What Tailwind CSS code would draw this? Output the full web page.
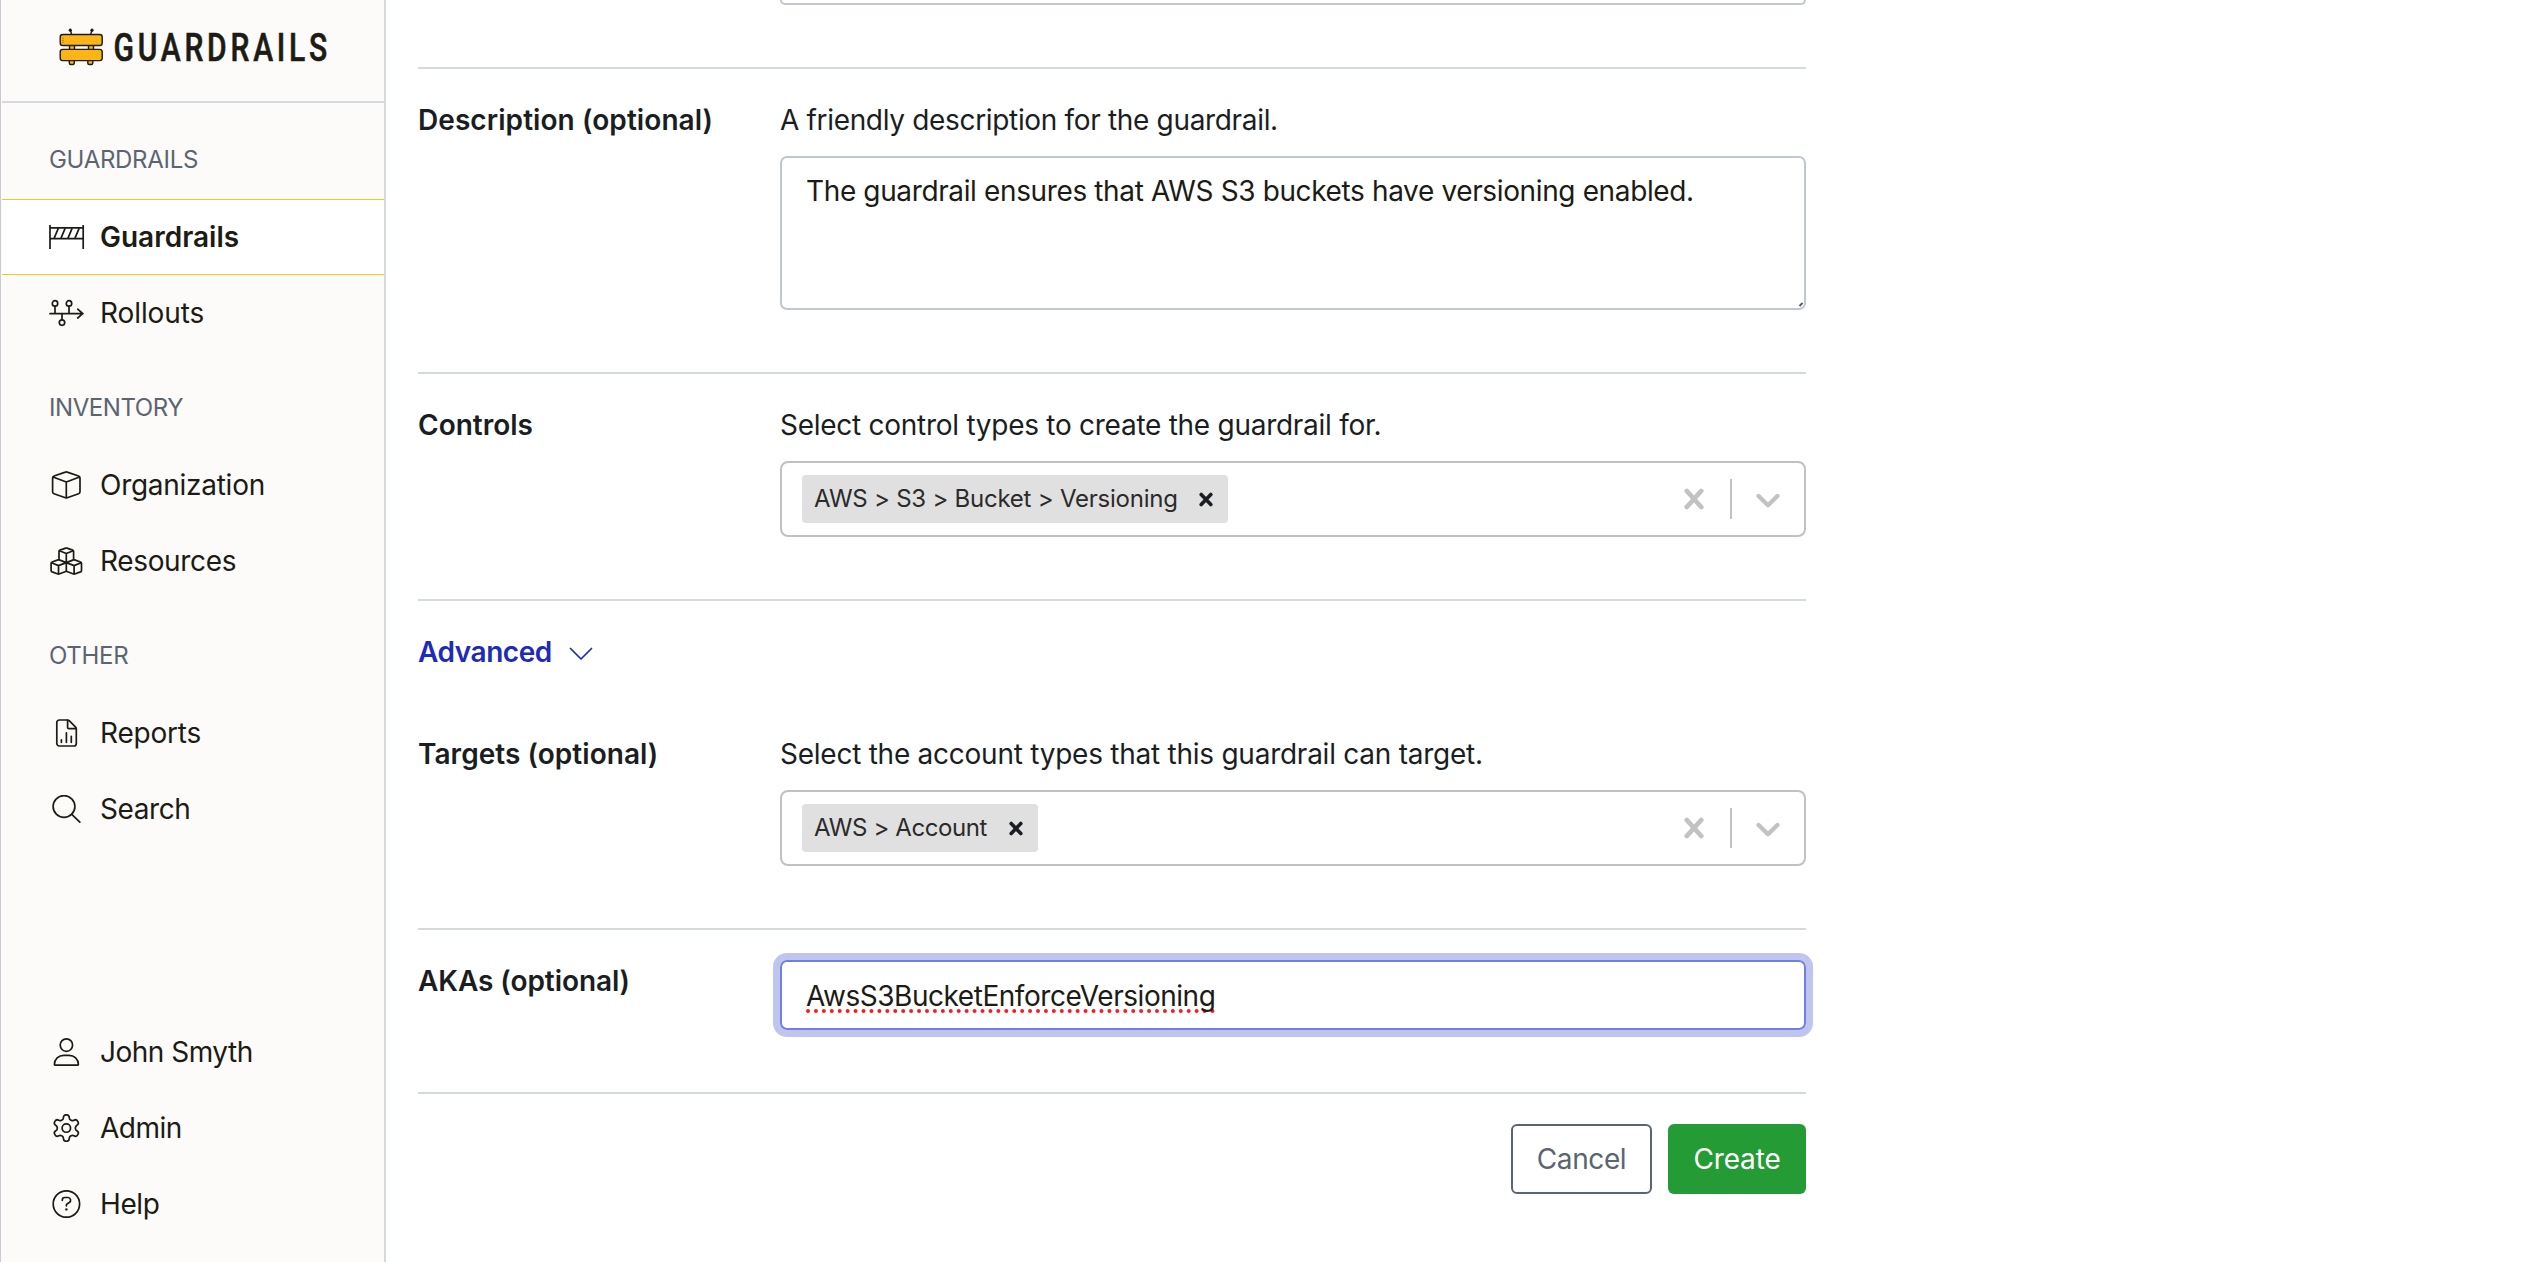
<!DOCTYPE html>
<html lang="en">
<head>
<meta charset="utf-8">
<title>Guardrails</title>
<script src="https://cdn.jsdelivr.net/npm/@tailwindcss/browser@4"></script>
</head>
<body class="flex h-[1262px] w-[2530px] overflow-hidden bg-white font-[Inter,sans-serif] text-[28px] leading-[42px] text-[#1a1e23]">

<aside class="flex w-[386px] shrink-0 flex-col border-l border-r-2 border-l-[#c9cbd1] border-r-[#d5dade] bg-[#fcfbf9] pl-px text-[#1c1b15]">
  <div class="h-[103px] shrink-0 border-b-2 border-[#d5dade]">
    <svg class="block" width="360" height="100" viewBox="2 0 360 100">
      <g stroke="#1c1b15" stroke-width="1.4">
        <path d="M70.3 30l1.5 5M92 30l-1.5 5" fill="none"/>
        <g fill="#fdb515">
          <path d="M69.5 45h5v5h-5zM88.5 45h5v5h-5z"/>
          <path d="M69.3 60h5v3a1.5 1.5 0 0 1-1.5 1.5h-2a1.5 1.5 0 0 1-1.500-1.500zM87.8 60h5v3a1.5 1.5 0 0 1-1.5 1.5h-2a1.5 1.5 0 0 1-1.500-1.500z"/>
          <rect x="60.2" y="34.5" width="42" height="11" rx="2.6"/>
          <rect x="60.2" y="49.4" width="42" height="11.2" rx="2.6"/>
        </g>
        <path d="M63 37.5v6" stroke="#a8730c" stroke-width="1.2" stroke-dasharray="1.2 1"/>
      </g>
      <circle cx="70.3" cy="30.2" r="1.6" fill="#1c1b15"/><circle cx="92" cy="30.2" r="1.6" fill="#1c1b15"/>
      <g transform="translate(113.500 61) scale(.78 1)"><text x="0" y="0" font-family="Roboto, sans-serif" font-size="38.500" font-weight="500" letter-spacing="3" textLength="277" lengthAdjust="spacing" fill="#1c1b15" stroke="#1c1b15" stroke-width=".6">GUARDRAILS</text></g>
    </svg>
  </div>

  <div class="flex h-24 shrink-0 items-center pt-[17px] pl-[47px] text-2xl tracking-[-0.3px] text-[#5b6571]">GUARDRAILS</div>
  <a class="flex h-[76px] shrink-0 items-center gap-[15px] border-t border-b border-[#fcc425] bg-white pl-[46px] font-semibold">
    <svg width="37" height="28" viewBox="0 0 37 28" fill="none" stroke="currentColor" stroke-width="1.7"><path d="M2 2v24M35.2 2v24M2 4.800h33M2 15.700h33M6.200 15.200l4-9.600M13 15.200l4-9.600M20 15.200l4-9.600M27 15.200l4-9.600"/></svg>Guardrails
  </a>
  <a class="flex h-[76px] shrink-0 items-center gap-[15px] pl-[46px] tracking-[-0.1px]">
    <svg width="37" height="28" viewBox="0 0 37 28" fill="none" stroke="currentColor" stroke-width="1.7" stroke-linecap="round"><path d="M2 14.600h33M29.700 10.200l5 4.400-5 4.400M7 7.300v7M21 7.300v7M14 14.600v6"/><circle cx="7" cy="4.400" r="2.700"/><circle cx="21" cy="4.400" r="2.700"/><circle cx="14" cy="23.600" r="2.700"/></svg>Rollouts
  </a>

  <div class="flex h-24 shrink-0 items-center pt-[17px] pl-[47px] text-2xl tracking-[-0.42px] text-[#5b6571]">INVENTORY</div>
  <a class="flex h-[76px] shrink-0 items-center gap-[15px] pl-[46px] tracking-[-0.27px]">
    <svg width="37" height="28" viewBox="0 0 37 28" fill="none" stroke="currentColor" stroke-width="1.7" stroke-linejoin="round"><path d="M17.400 1.100a2.500 2.500 0 0 1 1.800 0L30.600 5a2 2 0 0 1 1.400 1.900v13.900a2 2 0 0 1-1.400 1.900L19.200 26.800a2.500 2.500 0 0 1-1.800 0L6 22.700a2 2 0 0 1-1.400-1.900V6.900A2 2 0 0 1 6 5zM5 6l13.300 5L31.600 6M18.300 11v16"/></svg>Organization
  </a>
  <a class="flex h-[76px] shrink-0 items-center gap-[15px] pl-[46px] tracking-[-0.35px]">
    <svg width="37" height="28" viewBox="0 0 37 28" fill="none" stroke="currentColor" stroke-width="1.7" stroke-linejoin="round"><path d="M11 12.300V4.500a1.500 1.500 0 0 1 1-1.400l5.700-2a2 2 0 0 1 1.200 0l5.700 2a1.500 1.500 0 0 1 1 1.400v7.800M11.400 3.800l6.900 2.700 6.900-2.700M18.300 6.500v8.500M18.300 15.600v8.600l-7.200 2.800a2 2 0 0 1-1.200 0l-5.800-2.100a1.600 1.600 0 0 1-1-1.500v-6.900a1.600 1.600 0 0 1 1-1.500l6.500-2.400 7.700 3 7.700-3 6.500 2.400a1.600 1.600 0 0 1 1 1.500v6.900a1.600 1.600 0 0 1-1 1.500l-5.800 2.100a2 2 0 0 1-1.200 0l-7.200-2.800M3.500 15.800l7 2.800 7.800-3 7.800 3 7-2.800M10.500 18.600v8.500M26.100 18.600v8.500"/></svg>Resources
  </a>

  <div class="flex h-24 shrink-0 items-center pt-[17px] pl-[47px] text-2xl tracking-[-0.3px] text-[#5b6571]">OTHER</div>
  <a class="flex h-[76px] shrink-0 items-center gap-[15px] pl-[46px] tracking-[-0.2px]">
    <svg width="37" height="28" viewBox="0 0 37 28" fill="none" stroke="currentColor" stroke-width="1.7" stroke-linejoin="round" stroke-linecap="round"><path d="M11.300 1h8.200a2.500 2.500 0 0 1 1.700.7l6.400 6.400a2.500 2.500 0 0 1 .7 1.700v14.700a2.500 2.500 0 0 1-2.500 2.500H11.300a2.500 2.500 0 0 1-2.500-2.500V3.500a2.500 2.500 0 0 1 2.500-2.500zM19.600 1.200v7.200a1.300 1.300 0 0 0 1.300 1.300h7.200M13.400 20.800v2.500M18.400 13.800v9.500M23.300 17.300v6"/></svg>Reports
  </a>
  <a class="flex h-[76px] shrink-0 items-center gap-[15px] pl-[46px] tracking-[-0.4px]">
    <svg width="37" height="28" viewBox="0 0 37 28" fill="none" stroke="currentColor" stroke-width="1.7" stroke-linecap="round"><circle cx="16" cy="11.500" r="10.900"/><path d="M23.800 19.300l8 7.900"/></svg>Search
  </a>

  <div class="mt-[167px] flex h-[76px] shrink-0 items-center gap-[15px] pl-[46px] tracking-[-0.5px]">
    <svg width="37" height="28" viewBox="0 0 37 28" fill="none" stroke="currentColor" stroke-width="1.7" stroke-linejoin="round"><circle cx="18.400" cy="7.100" r="6.200"/><path d="M6.900 27.100c-.3 0-.5-.2-.5-.5 0-5.300 4.200-9.300 9.400-9.300h5.200c5.200 0 9.400 4 9.400 9.300 0 .3-.2.5-.5.5z"/></svg>John Smyth
  </div>
  <a class="flex h-[76px] shrink-0 items-center gap-[15px] pl-[46px] tracking-[-0.5px]">
    <svg width="37" height="28" viewBox="0 0 37 28" fill="none" stroke="currentColor" stroke-width="1.300"><g transform="translate(2.500 -1.800) scale(1.320)"><path d="M12.220 2h-.44a2 2 0 0 0-2 2v.18a2 2 0 0 1-1 1.730l-.43.25a2 2 0 0 1-2 0l-.15-.08a2 2 0 0 0-2.730.73l-.22.38a2 2 0 0 0 .73 2.730l.15.100a2 2 0 0 1 1 1.720v.51a2 2 0 0 1-1 1.740l-.15.090a2 2 0 0 0-.73 2.730l.22.38a2 2 0 0 0 2.730.73l.15-.08a2 2 0 0 1 2 0l.43.25a2 2 0 0 1 1 1.730V20a2 2 0 0 0 2 2h.44a2 2 0 0 0 2-2v-.18a2 2 0 0 1 1-1.730l.43-.25a2 2 0 0 1 2 0l.15.080a2 2 0 0 0 2.730-.73l.22-.39a2 2 0 0 0-.73-2.730l-.15-.080a2 2 0 0 1-1-1.740v-.5a2 2 0 0 1 1-1.740l.15-.090a2 2 0 0 0 .73-2.730l-.22-.38a2 2 0 0 0-2.730-.73l-.15.080a2 2 0 0 1-2 0l-.43-.25a2 2 0 0 1-1-1.730V4a2 2 0 0 0-2-2z"/><circle cx="12" cy="12" r="3.200"/></g></svg>Admin
  </a>
  <a class="flex h-[76px] shrink-0 items-center gap-[15px] pl-[46px] tracking-[-0.4px]">
    <svg width="37" height="28" viewBox="0 0 37 28" fill="none" stroke="currentColor" stroke-width="1.7" stroke-linecap="round"><circle cx="18.400" cy="14" r="13.200"/><path d="M14.300 10.300v-.4a2.400 2.400 0 0 1 2.400-2.400h3.200a2.700 2.700 0 0 1 1.400 5l-2.400 1.500a1 1 0 0 0-.5.900v.9"/><circle cx="18.400" cy="19.400" r="1.200" fill="currentColor" stroke="none"/></svg>Help
  </a>
</aside>

<main class="ml-8 w-[1388px] shrink-0">
  <section class="flex h-[69px] justify-end border-b-2 border-[#d5dade]">
    <div class="h-[5px] w-[1026px] rounded-b-[7px] border-2 border-t-0 border-[#c1c7d0]"></div>
  </section>

  <section class="flex h-[305px] border-b-2 border-[#d5dade] pt-[30px]">
    <div class="w-[362px] shrink-0 font-semibold tracking-[0.07px]">Description (optional)</div>
    <div class="w-[1026px] shrink-0">
      <div class="tracking-[-0.33px]">A friendly description for the guardrail.</div>
      <div class="relative mt-[15px] h-[154px] rounded-[7px] border-2 border-[#c1c7d0] pt-[12px] pl-[24px] tracking-[-0.37px] text-[#1c1b15]">The guardrail ensures that AWS S3 buckets have versioning enabled.
        <svg class="absolute right-0 bottom-0" width="8" height="8" viewBox="0 0 8 8"><path d="M3.500 6l3-3" stroke="#555" stroke-width="1.800"/></svg>
      </div>
    </div>
  </section>

  <section class="flex h-[227px] border-b-2 border-[#d5dade] pt-[30px]">
    <div class="w-[362px] shrink-0 font-semibold">Controls</div>
    <div class="w-[1026px] shrink-0">
      <div class="tracking-[-0.27px]">Select control types to create the guardrail for.</div>
      <div class="mt-[15px] flex h-[76px] items-center rounded-lg border-2 border-[#c1c1c1] pl-5">
        <div class="flex h-12 w-[426px] items-center justify-between rounded bg-[#e0e0e0] pr-[15px] pl-3 text-2xl tracking-[-0.24px] text-[#2b2b2b]">AWS &gt; S3 &gt; Bucket &gt; Versioning
          <svg width="14" height="15" viewBox="0 0 14 15" stroke="#1a1e23" stroke-width="3.600" stroke-linecap="round"><path d="M2.200 2.500l9.600 10M11.800 2.500l-9.600 10"/></svg>
        </div>
        <svg class="ml-auto" width="20" height="22" viewBox="0 0 20 22" stroke="#c2c2c2" stroke-width="4.800" stroke-linecap="round"><path d="M2.800 3l14.400 16M17.200 3L2.800 19"/></svg>
        <div class="ml-[26px] h-10 w-0.5 bg-[#c2c2c2]"></div>
        <svg class="mt-[3px] mr-6 ml-6" width="24" height="16" viewBox="0 0 24 16" fill="none" stroke="#c2c2c2" stroke-width="4.400" stroke-linecap="round" stroke-linejoin="round"><path d="M2.600 3l9.400 9.200L21.400 3"/></svg>
      </div>
    </div>
  </section>

  <div class="flex h-[122px] items-start pt-[30px] font-semibold tracking-[-0.45px] text-[#1d2bb8]">Advanced
    <svg class="mt-[15px] ml-[17px]" width="24" height="16" viewBox="0 0 24 16" fill="none" stroke="currentColor" stroke-width="1.700" stroke-linecap="round" stroke-linejoin="round"><path d="M1.500 2.500L12 13 22.500 2.500"/></svg>
  </div>

  <section class="flex h-[207px] border-b-2 border-[#d5dade] pt-[10px]">
    <div class="w-[362px] shrink-0 font-semibold tracking-[0.04px]">Targets (optional)</div>
    <div class="w-[1026px] shrink-0">
      <div class="tracking-[-0.25px]">Select the account types that this guardrail can target.</div>
      <div class="mt-[15px] flex h-[76px] items-center rounded-lg border-2 border-[#c1c1c1] pl-5">
        <div class="flex h-12 w-[236px] items-center justify-between rounded bg-[#e0e0e0] pr-[15px] pl-3 text-2xl tracking-[-0.4px] text-[#2b2b2b]">AWS &gt; Account
          <svg width="14" height="15" viewBox="0 0 14 15" stroke="#1a1e23" stroke-width="3.600" stroke-linecap="round"><path d="M2.200 2.500l9.600 10M11.800 2.500l-9.600 10"/></svg>
        </div>
        <svg class="ml-auto" width="20" height="22" viewBox="0 0 20 22" stroke="#c2c2c2" stroke-width="4.800" stroke-linecap="round"><path d="M2.800 3l14.400 16M17.200 3L2.800 19"/></svg>
        <div class="ml-[26px] h-10 w-0.5 bg-[#c2c2c2]"></div>
        <svg class="mt-[3px] mr-6 ml-6" width="24" height="16" viewBox="0 0 24 16" fill="none" stroke="#c2c2c2" stroke-width="4.400" stroke-linecap="round" stroke-linejoin="round"><path d="M2.600 3l9.400 9.200L21.400 3"/></svg>
      </div>
    </div>
  </section>

  <section class="flex h-[164px] border-b-2 border-[#d5dade] pt-[30px]">
    <div class="w-[362px] shrink-0 font-semibold tracking-[-0.07px]">AKAs (optional)</div>
    <div class="h-[70px] w-[1026px] shrink-0 rounded-[7px] border-2 border-[#7080e2] pt-[13px] pl-[24px] tracking-[-0.46px] text-[#1c1b15] shadow-[0_0_0_7px_#c0c5f0]"><span class="underline decoration-[#ff1a1a] decoration-dotted decoration-4 underline-offset-[3px] [text-decoration-skip-ink:none]">AwsS3BucketEnforceVersioning</span></div>
  </section>

  <div class="flex justify-end gap-4 pt-[30px]">
    <button class="h-[70px] w-[141px] rounded-[6px] border-2 border-[#5b6571] tracking-[-0.4px] text-[#5b6571]">Cancel</button>
    <button class="h-[70px] w-[138px] rounded-[6px] bg-[#259b35] tracking-[-0.15px] text-white">Create</button>
  </div>
</main>
</body>
</html>
